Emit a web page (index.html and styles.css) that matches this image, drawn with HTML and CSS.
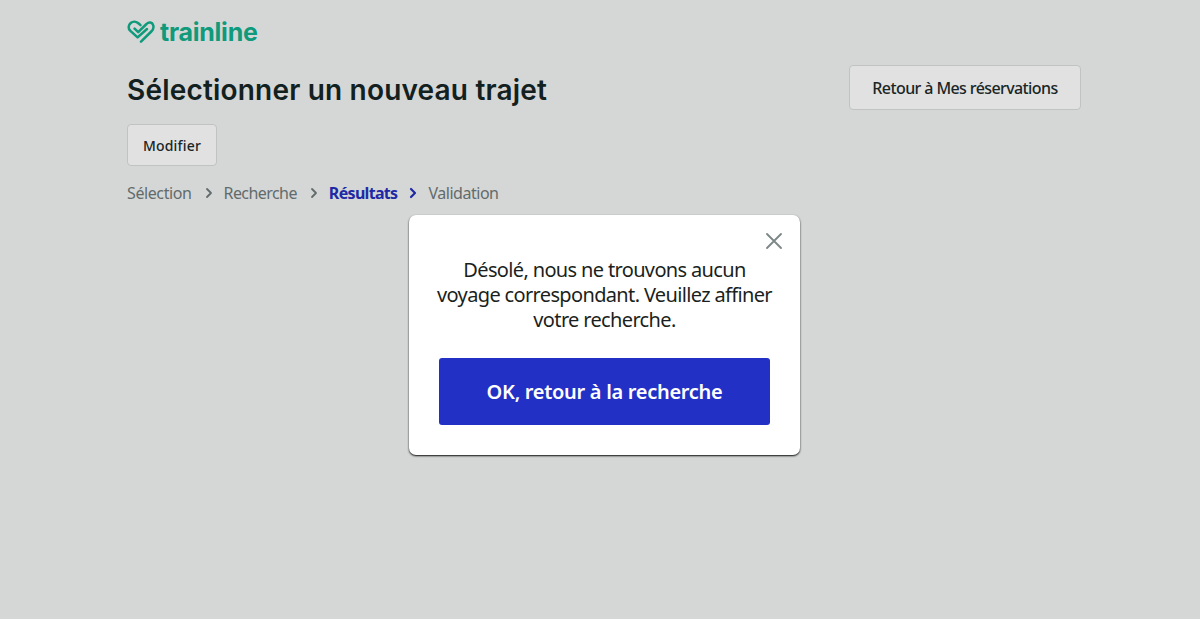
FILE: index.html
```html
<!DOCTYPE html>
<html lang="fr">
<head>
    <meta charset="UTF-8">
    <title>Trainline</title>
    <link rel="stylesheet" href="styles.css">
</head>
<body>
    <div class="page">
        <a class="logo" href="#">
            <svg class="logo-icon" width="28" height="24" viewBox="0 0 28 24">
                <path d="M13.500 5.200L11.700 3.500C9.300 1.200 6 1 3.700 3C1 5.400 1 8.500 3.400 10.900L10.600 17.400L20 9" />
                <path d="M7.600 8.700L11.200 12.200L19.500 4C22 1.300 25.500 2.300 26.300 5.500C26.900 7.800 26 9.800 24.300 11.500L14 21.700" />
            </svg>
            <span class="logo-text">trainline</span>
        </a>
        <div class="title-row">
            <h1>Sélectionner un nouveau trajet</h1>
            <button class="button button-back">Retour à Mes réservations</button>
        </div>
        <button class="button button-edit">Modifier</button>
        <div class="steps">
            <span class="step step-selection">Sélection</span>
            <svg class="chevron" width="8" height="12" viewBox="0 0 8 12"><path d="M2 2l4 4-4 4" /></svg>
            <span class="step step-search">Recherche</span>
            <svg class="chevron" width="8" height="12" viewBox="0 0 8 12"><path d="M2 2l4 4-4 4" /></svg>
            <span class="step step-results active">Résultats</span>
            <svg class="chevron active" width="8" height="12" viewBox="0 0 8 12"><path d="M2 2l4 4-4 4" /></svg>
            <span class="step step-validation">Validation</span>
        </div>
    </div>

    <div class="modal">
        <button class="close" aria-label="Fermer">
            <svg width="18" height="18" viewBox="0 0 18 18"><path d="M2 2l14 14M16 2L2 16" /></svg>
        </button>
        <p class="message">
            Désolé, nous ne trouvons aucun<br>
            voyage correspondant. Veuillez affiner<br>
            votre recherche.
        </p>
        <button class="button-ok">OK, retour à la recherche</button>
    </div>
</body>
</html>
```

FILE: styles.css
```css
body {
    margin: 0;
    height: 619px;
    overflow: hidden;
    background-color: #D5D7D6;
    color: #132020;
    font-family: "Noto Sans", "Open Sans", sans-serif;
}

button {
    font-family: inherit;
    cursor: pointer;
    box-sizing: border-box;
    padding: 0;
}

svg {
    fill: none;
    stroke-linecap: round;
    stroke-linejoin: round;
}

.page {
    width: 954px;
    margin-left: 127px;
    padding-top: 20px;
}

.logo {
    display: flex;
    align-items: center;
    height: 24px;
    color: #0E9A7B;
    text-decoration: none;
}

.logo-icon {
    stroke: #0E9A7B;
    stroke-width: 2.5;
}

.logo-text {
    margin-left: 5px;
    font-family: Inter, sans-serif;
    font-size: 25px;
    font-weight: 700;
    letter-spacing: -0.25px;
    line-height: 24px;
}

.title-row {
    display: flex;
    justify-content: space-between;
    height: 45px;
    margin-top: 21px;
}

h1 {
    margin: 0;
    font-family: Inter, sans-serif;
    font-size: 28px;
    font-weight: 600;
    letter-spacing: 0.19px;
    line-height: 50px;
    white-space: nowrap;
}

.button {
    border: 1px solid #C0C3C2;
    border-radius: 4px;
    background-color: #E1E1E1;
    color: #1A2526;
}

.button-back {
    width: 232px;
    height: 45px;
    font-size: 16px;
    font-weight: 500;
    letter-spacing: -0.6px;
}

.button-edit {
    display: block;
    width: 90px;
    height: 42px;
    margin-top: 14px;
    font-size: 14px;
    font-weight: 500;
    letter-spacing: 0.2px;
}

.steps {
    display: flex;
    align-items: center;
    height: 24px;
    margin-top: 15px;
    color: #626B6C;
    font-size: 16px;
    letter-spacing: -0.4px;
}

.step {
    white-space: nowrap;
}

.step-search {
    letter-spacing: -0.57px;
}

.step-results {
    letter-spacing: -0.68px;
}

.step-validation {
    letter-spacing: -0.48px;
}

.steps .active {
    color: #2029A5;
    font-weight: 700;
}

.chevron {
    margin: 0 11px 0 13px;
    stroke: #626B6C;
    stroke-width: 1.8;
}

.chevron.active {
    margin-left: 12px;
    stroke: #2029A5;
    stroke-width: 2.2;
}

.modal {
    position: absolute;
    top: 215px;
    left: 409px;
    width: 391px;
    height: 240px;
    border-radius: 7px;
    background-color: #FFFFFF;
    box-shadow: 0 1px 2px rgba(0, 0, 0, 0.95);
}

.close {
    display: block;
    width: 18px;
    height: 18px;
    margin: 17px 17px 0 auto;
    border: 0;
    background: none;
}

.close svg {
    display: block;
    stroke: #7E8788;
    stroke-width: 1.9;
}

.message {
    margin: 7px 0 0;
    color: #1B1F20;
    font-size: 20px;
    line-height: 25px;
    letter-spacing: -0.65px;
    text-align: center;
    white-space: nowrap;
}

.button-ok {
    display: block;
    width: 331px;
    height: 67px;
    margin: 26px 0 0 30px;
    border: 0;
    border-radius: 3px;
    background-color: #2330C6;
    color: #FFFFFF;
    font-size: 20px;
    font-weight: 600;
    letter-spacing: -0.3px;
}
```
